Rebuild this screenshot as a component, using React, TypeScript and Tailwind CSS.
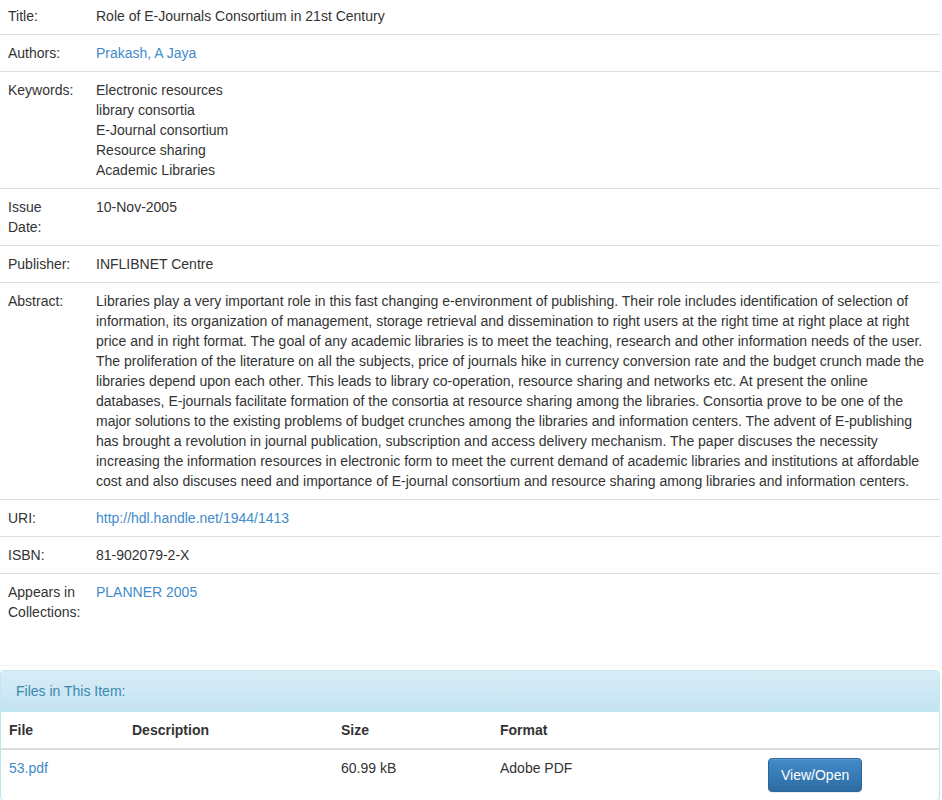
import React from "react";

const font = { fontFamily: '"Liberation Sans", Arial, Helvetica, sans-serif' };

function Row({
  label,
  children,
  first,
}: {
  label: React.ReactNode;
  children: React.ReactNode;
  first?: boolean;
}) {
  return (
    <tr className={first ? "" : "border-t border-[#dddddd]"}>
      <td
        className={`w-[88px] pl-[8px] pr-[8px] pb-[8px] align-top ${first ? "pt-[6px]" : "pt-[8px]"}`}
      >
        {label}
      </td>
      <td className={`pl-[8px] pr-[8px] pb-[8px] align-top ${first ? "pt-[6px]" : "pt-[8px]"}`}>
        {children}
      </td>
    </tr>
  );
}

const abstract =
  "Libraries play a very important role in this fast changing e-environment of publishing. Their role includes identification of selection of information, its organization of management, storage retrieval and dissemination to right users at the right time at right place at right price and in right format. The goal of any academic libraries is to meet the teaching, research and other information needs of the user. The proliferation of the literature on all the subjects, price of journals hike in currency conversion rate and the budget crunch made the libraries depend upon each other. This leads to library co-operation, resource sharing and networks etc. At present the online databases, E-journals facilitate formation of the consortia at resource sharing among the libraries. Consortia prove to be one of the major solutions to the existing problems of budget crunches among the libraries and information centers. The advent of E-publishing has brought a revolution in journal publication, subscription and access delivery mechanism. The paper discuses the necessity increasing the information resources in electronic form to meet the current demand of academic libraries and institutions at affordable cost and also discuses need and importance of E-journal consortium and resource sharing among libraries and information centers.";

export default function App() {
  const link = "text-[#428bca]";
  return (
    <div className="w-[942px] h-[800px] overflow-hidden bg-white text-[14px] leading-[20px] text-[#333333]" style={font}>
      <div className="w-[940px]">
        <table className="w-[940px] border-collapse table-fixed">
          <colgroup>
            <col className="w-[88px]" />
            <col />
          </colgroup>
          <tbody>
            <Row label="Title:" first>
              Role of E-Journals Consortium in 21st Century
            </Row>
            <Row label="Authors:">
              <span className={link}>Prakash, A Jaya</span>
            </Row>
            <Row label="Keywords:">
              Electronic resources
              <br />
              library consortia
              <br />
              E-Journal consortium
              <br />
              Resource sharing
              <br />
              Academic Libraries
            </Row>
            <Row
              label={
                <>
                  Issue
                  <br />
                  Date:
                </>
              }
            >
              10-Nov-2005
            </Row>
            <Row label="Publisher:">INFLIBNET Centre</Row>
            <Row label="Abstract:">{abstract}</Row>
            <Row label="URI:">
              <span className={link}>http://hdl.handle.net/1944/1413</span>
            </Row>
            <Row label="ISBN:">81-902079-2-X</Row>
            <Row
              label={
                <>
                  Appears in
                  <br />
                  Collections:
                </>
              }
            >
              <span className={link}>PLANNER 2005</span>
            </Row>
          </tbody>
        </table>

        <div className="h-[35px]" />
        <div className="h-px bg-[#f4f4f4]" />
        <div className="h-[4px]" />

        <div className="rounded-[4px] border border-[#bce8f1] shadow-[0_1px_1px_rgba(0,0,0,0.05)]">
          <div className="rounded-t-[3px] border-b border-[#bce8f1] bg-gradient-to-b from-[#d9edf7] to-[#c4e3f3] px-[15px] py-[10px] text-[#3a87ad]">
            Files in This Item:
          </div>
          <table className="w-full border-collapse table-fixed">
            <colgroup>
              <col className="w-[123px]" />
              <col className="w-[209px]" />
              <col className="w-[159px]" />
              <col className="w-[268px]" />
              <col />
            </colgroup>
            <thead>
              <tr className="border-b-2 border-[#dddddd]">
                <th className="p-[8px] text-left font-bold align-bottom">File</th>
                <th className="p-[8px] text-left font-bold align-bottom">Description</th>
                <th className="p-[8px] text-left font-bold align-bottom">Size</th>
                <th className="p-[8px] text-left font-bold align-bottom">Format</th>
                <th className="p-[8px] text-left font-bold align-bottom"></th>
              </tr>
            </thead>
            <tbody>
              <tr>
                <td className="p-[8px] align-top">
                  <span className={link}>53.pdf</span>
                </td>
                <td className="p-[8px] align-top"></td>
                <td className="p-[8px] align-top">60.99 kB</td>
                <td className="p-[8px] align-top">Adobe PDF</td>
                <td className="p-[8px] align-top">
                  <button className="rounded-[4px] border border-[#2b669a] bg-gradient-to-b from-[#428bca] to-[#2d6ca2] px-[12px] py-[6px] text-white leading-[20px] shadow-[inset_0_1px_0_rgba(255,255,255,0.15),0_1px_1px_rgba(0,0,0,0.075)]">
                    View/Open
                  </button>
                </td>
              </tr>
            </tbody>
          </table>
        </div>
      </div>
    </div>
  );
}
